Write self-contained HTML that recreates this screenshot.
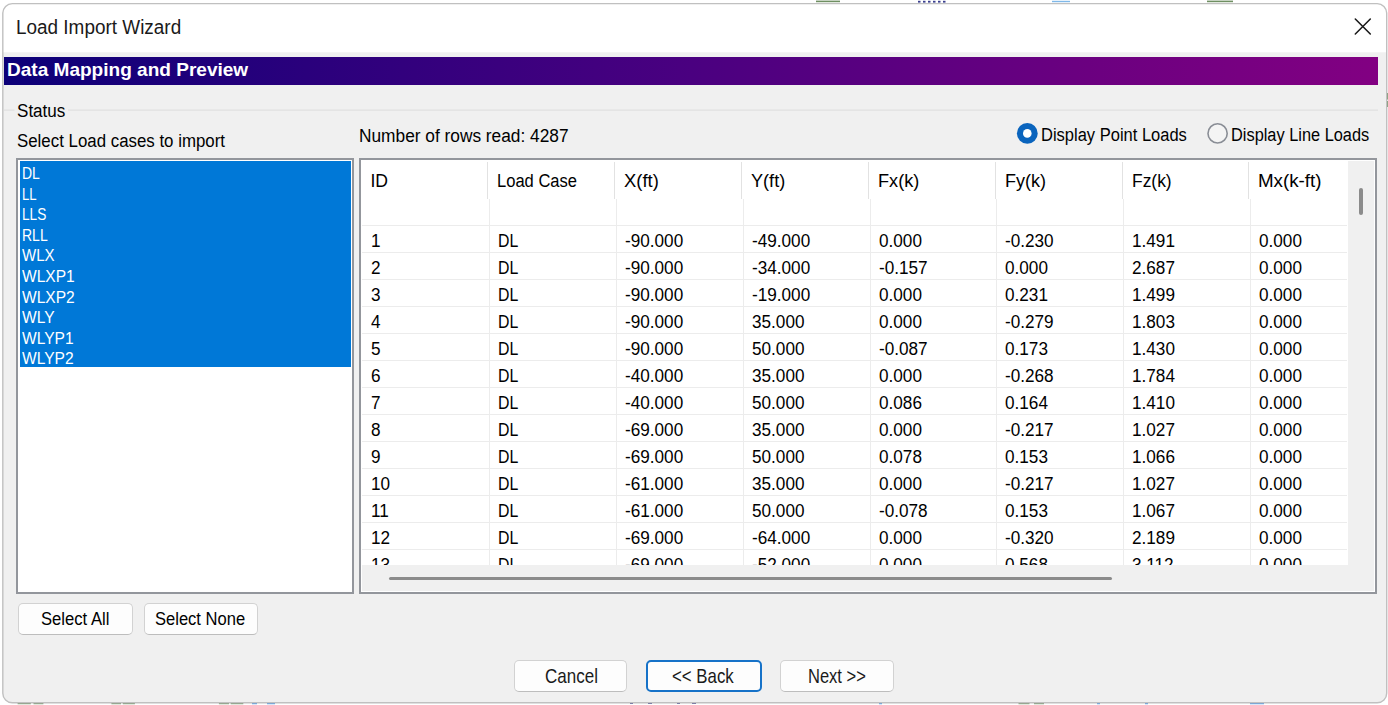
<!DOCTYPE html>
<html lang="en"><head><meta charset="utf-8"><title>Load Import Wizard</title>
<style>
html,body{margin:0;padding:0;background:#fff;}
body{width:1388px;height:705px;position:relative;overflow:hidden;font-family:'Liberation Sans',sans-serif;}
.a{position:absolute;box-sizing:border-box;}
.t{position:absolute;white-space:nowrap;transform-origin:0 50%;display:block;}
#win{left:3px;top:3px;width:1384px;height:699px;border:1px solid #bcbcbc;border-radius:9px;background:#f0f0f0;overflow:hidden;box-shadow:0 0 2px rgba(0,0,0,.15);}
#titlebar{left:0;top:0;width:1384px;height:48.5px;background:#fff;}
#grad{left:4px;top:56.5px;width:1373.8px;height:28.5px;background:linear-gradient(90deg,#0c0078 0%,#2a007c 22%,#4a0080 50%,#6a0080 78%,#820082 100%);}
.gl{height:1px;background:#dcdcdc;}
.box{border:2px solid #93969c;background:#fff;}
.sel{background:#0078d7;}
.btn{background:#fdfdfd;border:1px solid #d2d2d2;border-bottom-color:#bdbdbd;border-radius:5px;}
.hg{background:#ececec;height:1px;}
.vg{background:#ececec;width:1px;}
.hs{background:#e2e2e2;width:1px;}
</style></head><body>
<svg class="a" style="left:0;top:0" width="1388" height="705" viewBox="0 0 1388 705">
<defs><clipPath id="wc"><rect x="2.8" y="3.6" width="1383.9" height="699.2" rx="9.5" ry="9.5"/></clipPath></defs>
<rect x="17.6" y="702.6" width="13.2" height="1.6" fill="#6f8f62"/><rect x="33.5" y="702.6" width="9.9" height="1.6" fill="#6f8f62"/><rect x="111.4" y="702.6" width="9.6" height="1.6" fill="#6f8f62"/><rect x="122.8" y="702.6" width="12.1" height="1.6" fill="#6f8f62"/><rect x="218.9" y="702.6" width="10.1" height="1.6" fill="#6f8f62"/><rect x="230.7" y="702.6" width="12.6" height="1.6" fill="#6f8f62"/><rect x="1018.5" y="702.6" width="11.0" height="1.6" fill="#6f8f62"/><rect x="1034" y="702.6" width="10" height="1.6" fill="#6f8f62"/><rect x="252" y="702.6" width="5" height="1.6" fill="#3a8fe8"/><rect x="267" y="702.6" width="8" height="1.6" fill="#3a8fe8"/><rect x="879" y="702.6" width="3" height="1.6" fill="#3a8fe8"/><rect x="1097" y="702.6" width="3" height="1.6" fill="#3a8fe8"/><rect x="1145" y="702.6" width="3" height="1.6" fill="#3a8fe8"/><rect x="1250" y="702.6" width="14" height="1.6" fill="#3a8fe8"/><rect x="630" y="702.8" width="3" height="1.2" fill="#3b3f8f"/><rect x="648" y="702.8" width="4" height="1.2" fill="#3b3f8f"/><rect x="677" y="702.8" width="3" height="1.2" fill="#3b3f8f"/><rect x="692" y="702.8" width="4" height="1.2" fill="#3b3f8f"/><rect x="816" y="0.6" width="24" height="1.6" fill="#6f8f62"/><rect x="1207" y="0.6" width="26" height="1.6" fill="#6f8f62"/><rect x="918" y="0.8" width="2.5" height="1.8" fill="#3b3f8f"/><rect x="923" y="0.8" width="2.5" height="1.8" fill="#3b3f8f"/><rect x="928" y="0.8" width="2.5" height="1.8" fill="#3b3f8f"/><rect x="933" y="0.8" width="2.5" height="1.8" fill="#3b3f8f"/><rect x="938" y="0.8" width="2.5" height="1.8" fill="#3b3f8f"/><rect x="943" y="0.8" width="2.5" height="1.8" fill="#3b3f8f"/><rect x="1052" y="0.8" width="18" height="1.4" fill="#7fb8e8"/><rect x="1386.6" y="93" width="1.4" height="6.5" fill="#6f8f62"/><rect x="1386.6" y="101" width="1.4" height="6" fill="#6f8f62"/>
<rect x="2.8" y="3.6" width="1383.9" height="699.2" rx="9.5" ry="9.5" fill="#f0f0f0"/>
<rect x="0" y="0" width="1388" height="52.3" fill="#fff" clip-path="url(#wc)"/>
<rect x="2.8" y="3.6" width="1383.9" height="699.2" rx="9.5" ry="9.5" fill="none" stroke="#c0c0c0" stroke-width="1.4"/>
<rect x="4" y="109.6" width="10.5" height="1" fill="#dcdcdc"/><rect x="68" y="109.6" width="1310" height="1" fill="#dcdcdc"/>
</svg>
<svg class="a" style="left:1352px;top:16px" width="22" height="22" viewBox="0 0 22 22"><path d="M3.3 3.0 L18.3 18.0 M18.3 3.0 L3.3 18.0" stroke="#1a1a1a" stroke-width="1.55" fill="none" stroke-linecap="round"/></svg>
<div id="grad" class="a"></div>
<svg class="a" style="left:1015px;top:121px" width="25" height="25" viewBox="0 0 25 25"><circle cx="12.3" cy="12.4" r="10.4" fill="#0a64bd"/><circle cx="12.3" cy="12.4" r="4.3" fill="#fff"/></svg>
<svg class="a" style="left:1205px;top:121px" width="25" height="25" viewBox="0 0 25 25"><circle cx="12.6" cy="12.4" r="9.6" fill="#f4f4f4" stroke="#898d95" stroke-width="1.6"/></svg>
<div class="a box" style="left:16.4px;top:158px;width:337.5px;height:435.7px"></div>
<div class="a sel" style="left:19.7px;top:161.2px;width:331.1px;height:205.8px"></div>
<div class="a box" style="left:359px;top:158px;width:1018px;height:435.7px"></div>
<div class="a" style="left:1348.2px;top:161.2px;width:25.8px;height:429.8px;background:#f0f0f0"></div>
<div class="a" style="left:362px;top:565px;width:1012px;height:26px;background:#f0f0f0"></div>
<div class="a" style="left:1358.9px;top:188.4px;width:4px;height:26.6px;background:#8b8b8b;border-radius:2px"></div>
<div class="a" style="left:389px;top:576.8px;width:723px;height:3px;background:#8b8b8b;border-radius:1.5px"></div>
<div class="a hs" style="left:487.30px;top:161.5px;height:37.8px"></div><div class="a vg" style="left:489.00px;top:199.3px;height:365.7px"></div>
<div class="a hs" style="left:614.15px;top:161.5px;height:37.8px"></div><div class="a vg" style="left:615.85px;top:199.3px;height:365.7px"></div>
<div class="a hs" style="left:741.00px;top:161.5px;height:37.8px"></div><div class="a vg" style="left:742.70px;top:199.3px;height:365.7px"></div>
<div class="a hs" style="left:867.85px;top:161.5px;height:37.8px"></div><div class="a vg" style="left:869.55px;top:199.3px;height:365.7px"></div>
<div class="a hs" style="left:994.70px;top:161.5px;height:37.8px"></div><div class="a vg" style="left:996.40px;top:199.3px;height:365.7px"></div>
<div class="a hs" style="left:1121.55px;top:161.5px;height:37.8px"></div><div class="a vg" style="left:1123.25px;top:199.3px;height:365.7px"></div>
<div class="a hs" style="left:1248.40px;top:161.5px;height:37.8px"></div><div class="a vg" style="left:1250.10px;top:199.3px;height:365.7px"></div>
<div class="a hg" style="left:362.3px;top:224.90px;width:984.7px"></div>
<div class="a hg" style="left:362.3px;top:251.90px;width:984.7px"></div>
<div class="a hg" style="left:362.3px;top:278.90px;width:984.7px"></div>
<div class="a hg" style="left:362.3px;top:305.90px;width:984.7px"></div>
<div class="a hg" style="left:362.3px;top:332.90px;width:984.7px"></div>
<div class="a hg" style="left:362.3px;top:359.90px;width:984.7px"></div>
<div class="a hg" style="left:362.3px;top:386.90px;width:984.7px"></div>
<div class="a hg" style="left:362.3px;top:413.90px;width:984.7px"></div>
<div class="a hg" style="left:362.3px;top:440.90px;width:984.7px"></div>
<div class="a hg" style="left:362.3px;top:467.90px;width:984.7px"></div>
<div class="a hg" style="left:362.3px;top:494.90px;width:984.7px"></div>
<div class="a hg" style="left:362.3px;top:521.90px;width:984.7px"></div>
<div class="a hg" style="left:362.3px;top:548.90px;width:984.7px"></div>
<div class="a" style="left:362px;top:161px;width:986.2px;height:404px;overflow:hidden"><span class="t" style="left:9.20px;top:71.80px;font-size:17.6px;line-height:17.6px;color:#000;transform:scaleX(0.975);">1</span><span class="t" style="left:136.05px;top:71.80px;font-size:17.6px;line-height:17.6px;color:#000;transform:scaleX(0.9);">DL</span><span class="t" style="left:262.90px;top:71.80px;font-size:17.6px;line-height:17.6px;color:#000;transform:scaleX(0.975);">-90.000</span><span class="t" style="left:389.75px;top:71.80px;font-size:17.6px;line-height:17.6px;color:#000;transform:scaleX(0.975);">-49.000</span><span class="t" style="left:516.60px;top:71.80px;font-size:17.6px;line-height:17.6px;color:#000;transform:scaleX(0.975);">0.000</span><span class="t" style="left:643.45px;top:71.80px;font-size:17.6px;line-height:17.6px;color:#000;transform:scaleX(0.975);">-0.230</span><span class="t" style="left:770.30px;top:71.80px;font-size:17.6px;line-height:17.6px;color:#000;transform:scaleX(0.975);">1.491</span><span class="t" style="left:897.15px;top:71.80px;font-size:17.6px;line-height:17.6px;color:#000;transform:scaleX(0.975);">0.000</span><span class="t" style="left:9.20px;top:98.80px;font-size:17.6px;line-height:17.6px;color:#000;transform:scaleX(0.975);">2</span><span class="t" style="left:136.05px;top:98.80px;font-size:17.6px;line-height:17.6px;color:#000;transform:scaleX(0.9);">DL</span><span class="t" style="left:262.90px;top:98.80px;font-size:17.6px;line-height:17.6px;color:#000;transform:scaleX(0.975);">-90.000</span><span class="t" style="left:389.75px;top:98.80px;font-size:17.6px;line-height:17.6px;color:#000;transform:scaleX(0.975);">-34.000</span><span class="t" style="left:516.60px;top:98.80px;font-size:17.6px;line-height:17.6px;color:#000;transform:scaleX(0.975);">-0.157</span><span class="t" style="left:643.45px;top:98.80px;font-size:17.6px;line-height:17.6px;color:#000;transform:scaleX(0.975);">0.000</span><span class="t" style="left:770.30px;top:98.80px;font-size:17.6px;line-height:17.6px;color:#000;transform:scaleX(0.975);">2.687</span><span class="t" style="left:897.15px;top:98.80px;font-size:17.6px;line-height:17.6px;color:#000;transform:scaleX(0.975);">0.000</span><span class="t" style="left:9.20px;top:125.80px;font-size:17.6px;line-height:17.6px;color:#000;transform:scaleX(0.975);">3</span><span class="t" style="left:136.05px;top:125.80px;font-size:17.6px;line-height:17.6px;color:#000;transform:scaleX(0.9);">DL</span><span class="t" style="left:262.90px;top:125.80px;font-size:17.6px;line-height:17.6px;color:#000;transform:scaleX(0.975);">-90.000</span><span class="t" style="left:389.75px;top:125.80px;font-size:17.6px;line-height:17.6px;color:#000;transform:scaleX(0.975);">-19.000</span><span class="t" style="left:516.60px;top:125.80px;font-size:17.6px;line-height:17.6px;color:#000;transform:scaleX(0.975);">0.000</span><span class="t" style="left:643.45px;top:125.80px;font-size:17.6px;line-height:17.6px;color:#000;transform:scaleX(0.975);">0.231</span><span class="t" style="left:770.30px;top:125.80px;font-size:17.6px;line-height:17.6px;color:#000;transform:scaleX(0.975);">1.499</span><span class="t" style="left:897.15px;top:125.80px;font-size:17.6px;line-height:17.6px;color:#000;transform:scaleX(0.975);">0.000</span><span class="t" style="left:9.20px;top:152.80px;font-size:17.6px;line-height:17.6px;color:#000;transform:scaleX(0.975);">4</span><span class="t" style="left:136.05px;top:152.80px;font-size:17.6px;line-height:17.6px;color:#000;transform:scaleX(0.9);">DL</span><span class="t" style="left:262.90px;top:152.80px;font-size:17.6px;line-height:17.6px;color:#000;transform:scaleX(0.975);">-90.000</span><span class="t" style="left:389.75px;top:152.80px;font-size:17.6px;line-height:17.6px;color:#000;transform:scaleX(0.975);">35.000</span><span class="t" style="left:516.60px;top:152.80px;font-size:17.6px;line-height:17.6px;color:#000;transform:scaleX(0.975);">0.000</span><span class="t" style="left:643.45px;top:152.80px;font-size:17.6px;line-height:17.6px;color:#000;transform:scaleX(0.975);">-0.279</span><span class="t" style="left:770.30px;top:152.80px;font-size:17.6px;line-height:17.6px;color:#000;transform:scaleX(0.975);">1.803</span><span class="t" style="left:897.15px;top:152.80px;font-size:17.6px;line-height:17.6px;color:#000;transform:scaleX(0.975);">0.000</span><span class="t" style="left:9.20px;top:179.80px;font-size:17.6px;line-height:17.6px;color:#000;transform:scaleX(0.975);">5</span><span class="t" style="left:136.05px;top:179.80px;font-size:17.6px;line-height:17.6px;color:#000;transform:scaleX(0.9);">DL</span><span class="t" style="left:262.90px;top:179.80px;font-size:17.6px;line-height:17.6px;color:#000;transform:scaleX(0.975);">-90.000</span><span class="t" style="left:389.75px;top:179.80px;font-size:17.6px;line-height:17.6px;color:#000;transform:scaleX(0.975);">50.000</span><span class="t" style="left:516.60px;top:179.80px;font-size:17.6px;line-height:17.6px;color:#000;transform:scaleX(0.975);">-0.087</span><span class="t" style="left:643.45px;top:179.80px;font-size:17.6px;line-height:17.6px;color:#000;transform:scaleX(0.975);">0.173</span><span class="t" style="left:770.30px;top:179.80px;font-size:17.6px;line-height:17.6px;color:#000;transform:scaleX(0.975);">1.430</span><span class="t" style="left:897.15px;top:179.80px;font-size:17.6px;line-height:17.6px;color:#000;transform:scaleX(0.975);">0.000</span><span class="t" style="left:9.20px;top:206.80px;font-size:17.6px;line-height:17.6px;color:#000;transform:scaleX(0.975);">6</span><span class="t" style="left:136.05px;top:206.80px;font-size:17.6px;line-height:17.6px;color:#000;transform:scaleX(0.9);">DL</span><span class="t" style="left:262.90px;top:206.80px;font-size:17.6px;line-height:17.6px;color:#000;transform:scaleX(0.975);">-40.000</span><span class="t" style="left:389.75px;top:206.80px;font-size:17.6px;line-height:17.6px;color:#000;transform:scaleX(0.975);">35.000</span><span class="t" style="left:516.60px;top:206.80px;font-size:17.6px;line-height:17.6px;color:#000;transform:scaleX(0.975);">0.000</span><span class="t" style="left:643.45px;top:206.80px;font-size:17.6px;line-height:17.6px;color:#000;transform:scaleX(0.975);">-0.268</span><span class="t" style="left:770.30px;top:206.80px;font-size:17.6px;line-height:17.6px;color:#000;transform:scaleX(0.975);">1.784</span><span class="t" style="left:897.15px;top:206.80px;font-size:17.6px;line-height:17.6px;color:#000;transform:scaleX(0.975);">0.000</span><span class="t" style="left:9.20px;top:233.80px;font-size:17.6px;line-height:17.6px;color:#000;transform:scaleX(0.975);">7</span><span class="t" style="left:136.05px;top:233.80px;font-size:17.6px;line-height:17.6px;color:#000;transform:scaleX(0.9);">DL</span><span class="t" style="left:262.90px;top:233.80px;font-size:17.6px;line-height:17.6px;color:#000;transform:scaleX(0.975);">-40.000</span><span class="t" style="left:389.75px;top:233.80px;font-size:17.6px;line-height:17.6px;color:#000;transform:scaleX(0.975);">50.000</span><span class="t" style="left:516.60px;top:233.80px;font-size:17.6px;line-height:17.6px;color:#000;transform:scaleX(0.975);">0.086</span><span class="t" style="left:643.45px;top:233.80px;font-size:17.6px;line-height:17.6px;color:#000;transform:scaleX(0.975);">0.164</span><span class="t" style="left:770.30px;top:233.80px;font-size:17.6px;line-height:17.6px;color:#000;transform:scaleX(0.975);">1.410</span><span class="t" style="left:897.15px;top:233.80px;font-size:17.6px;line-height:17.6px;color:#000;transform:scaleX(0.975);">0.000</span><span class="t" style="left:9.20px;top:260.80px;font-size:17.6px;line-height:17.6px;color:#000;transform:scaleX(0.975);">8</span><span class="t" style="left:136.05px;top:260.80px;font-size:17.6px;line-height:17.6px;color:#000;transform:scaleX(0.9);">DL</span><span class="t" style="left:262.90px;top:260.80px;font-size:17.6px;line-height:17.6px;color:#000;transform:scaleX(0.975);">-69.000</span><span class="t" style="left:389.75px;top:260.80px;font-size:17.6px;line-height:17.6px;color:#000;transform:scaleX(0.975);">35.000</span><span class="t" style="left:516.60px;top:260.80px;font-size:17.6px;line-height:17.6px;color:#000;transform:scaleX(0.975);">0.000</span><span class="t" style="left:643.45px;top:260.80px;font-size:17.6px;line-height:17.6px;color:#000;transform:scaleX(0.975);">-0.217</span><span class="t" style="left:770.30px;top:260.80px;font-size:17.6px;line-height:17.6px;color:#000;transform:scaleX(0.975);">1.027</span><span class="t" style="left:897.15px;top:260.80px;font-size:17.6px;line-height:17.6px;color:#000;transform:scaleX(0.975);">0.000</span><span class="t" style="left:9.20px;top:287.80px;font-size:17.6px;line-height:17.6px;color:#000;transform:scaleX(0.975);">9</span><span class="t" style="left:136.05px;top:287.80px;font-size:17.6px;line-height:17.6px;color:#000;transform:scaleX(0.9);">DL</span><span class="t" style="left:262.90px;top:287.80px;font-size:17.6px;line-height:17.6px;color:#000;transform:scaleX(0.975);">-69.000</span><span class="t" style="left:389.75px;top:287.80px;font-size:17.6px;line-height:17.6px;color:#000;transform:scaleX(0.975);">50.000</span><span class="t" style="left:516.60px;top:287.80px;font-size:17.6px;line-height:17.6px;color:#000;transform:scaleX(0.975);">0.078</span><span class="t" style="left:643.45px;top:287.80px;font-size:17.6px;line-height:17.6px;color:#000;transform:scaleX(0.975);">0.153</span><span class="t" style="left:770.30px;top:287.80px;font-size:17.6px;line-height:17.6px;color:#000;transform:scaleX(0.975);">1.066</span><span class="t" style="left:897.15px;top:287.80px;font-size:17.6px;line-height:17.6px;color:#000;transform:scaleX(0.975);">0.000</span><span class="t" style="left:9.20px;top:314.80px;font-size:17.6px;line-height:17.6px;color:#000;transform:scaleX(0.975);">10</span><span class="t" style="left:136.05px;top:314.80px;font-size:17.6px;line-height:17.6px;color:#000;transform:scaleX(0.9);">DL</span><span class="t" style="left:262.90px;top:314.80px;font-size:17.6px;line-height:17.6px;color:#000;transform:scaleX(0.975);">-61.000</span><span class="t" style="left:389.75px;top:314.80px;font-size:17.6px;line-height:17.6px;color:#000;transform:scaleX(0.975);">35.000</span><span class="t" style="left:516.60px;top:314.80px;font-size:17.6px;line-height:17.6px;color:#000;transform:scaleX(0.975);">0.000</span><span class="t" style="left:643.45px;top:314.80px;font-size:17.6px;line-height:17.6px;color:#000;transform:scaleX(0.975);">-0.217</span><span class="t" style="left:770.30px;top:314.80px;font-size:17.6px;line-height:17.6px;color:#000;transform:scaleX(0.975);">1.027</span><span class="t" style="left:897.15px;top:314.80px;font-size:17.6px;line-height:17.6px;color:#000;transform:scaleX(0.975);">0.000</span><span class="t" style="left:9.20px;top:341.80px;font-size:17.6px;line-height:17.6px;color:#000;transform:scaleX(0.975);">11</span><span class="t" style="left:136.05px;top:341.80px;font-size:17.6px;line-height:17.6px;color:#000;transform:scaleX(0.9);">DL</span><span class="t" style="left:262.90px;top:341.80px;font-size:17.6px;line-height:17.6px;color:#000;transform:scaleX(0.975);">-61.000</span><span class="t" style="left:389.75px;top:341.80px;font-size:17.6px;line-height:17.6px;color:#000;transform:scaleX(0.975);">50.000</span><span class="t" style="left:516.60px;top:341.80px;font-size:17.6px;line-height:17.6px;color:#000;transform:scaleX(0.975);">-0.078</span><span class="t" style="left:643.45px;top:341.80px;font-size:17.6px;line-height:17.6px;color:#000;transform:scaleX(0.975);">0.153</span><span class="t" style="left:770.30px;top:341.80px;font-size:17.6px;line-height:17.6px;color:#000;transform:scaleX(0.975);">1.067</span><span class="t" style="left:897.15px;top:341.80px;font-size:17.6px;line-height:17.6px;color:#000;transform:scaleX(0.975);">0.000</span><span class="t" style="left:9.20px;top:368.80px;font-size:17.6px;line-height:17.6px;color:#000;transform:scaleX(0.975);">12</span><span class="t" style="left:136.05px;top:368.80px;font-size:17.6px;line-height:17.6px;color:#000;transform:scaleX(0.9);">DL</span><span class="t" style="left:262.90px;top:368.80px;font-size:17.6px;line-height:17.6px;color:#000;transform:scaleX(0.975);">-69.000</span><span class="t" style="left:389.75px;top:368.80px;font-size:17.6px;line-height:17.6px;color:#000;transform:scaleX(0.975);">-64.000</span><span class="t" style="left:516.60px;top:368.80px;font-size:17.6px;line-height:17.6px;color:#000;transform:scaleX(0.975);">0.000</span><span class="t" style="left:643.45px;top:368.80px;font-size:17.6px;line-height:17.6px;color:#000;transform:scaleX(0.975);">-0.320</span><span class="t" style="left:770.30px;top:368.80px;font-size:17.6px;line-height:17.6px;color:#000;transform:scaleX(0.975);">2.189</span><span class="t" style="left:897.15px;top:368.80px;font-size:17.6px;line-height:17.6px;color:#000;transform:scaleX(0.975);">0.000</span><span class="t" style="left:9.20px;top:395.80px;font-size:17.6px;line-height:17.6px;color:#000;transform:scaleX(0.975);">13</span><span class="t" style="left:136.05px;top:395.80px;font-size:17.6px;line-height:17.6px;color:#000;transform:scaleX(0.9);">DL</span><span class="t" style="left:262.90px;top:395.80px;font-size:17.6px;line-height:17.6px;color:#000;transform:scaleX(0.975);">-69.000</span><span class="t" style="left:389.75px;top:395.80px;font-size:17.6px;line-height:17.6px;color:#000;transform:scaleX(0.975);">-52.000</span><span class="t" style="left:516.60px;top:395.80px;font-size:17.6px;line-height:17.6px;color:#000;transform:scaleX(0.975);">0.000</span><span class="t" style="left:643.45px;top:395.80px;font-size:17.6px;line-height:17.6px;color:#000;transform:scaleX(0.975);">0.568</span><span class="t" style="left:770.30px;top:395.80px;font-size:17.6px;line-height:17.6px;color:#000;transform:scaleX(0.975);">3.112</span><span class="t" style="left:897.15px;top:395.80px;font-size:17.6px;line-height:17.6px;color:#000;transform:scaleX(0.975);">0.000</span></div>
<div class="a btn" style="left:18.4px;top:603.2px;width:114.2px;height:32px"></div>
<div class="a btn" style="left:143.7px;top:603.2px;width:114.6px;height:32px"></div>
<div class="a btn" style="left:513.5px;top:659.8px;width:113.8px;height:32px"></div>
<div class="a btn" style="left:646.2px;top:659.8px;width:115.4px;height:32px;border:2px solid #1672c8"></div>
<div class="a btn" style="left:780px;top:659.8px;width:114px;height:32px"></div>
<span class="t" style="left:15.50px;top:18.11px;font-size:19.6px;line-height:19.6px;color:#1a1a1a;transform:scaleX(0.966);">Load Import Wizard</span>
<span class="t" style="left:7.30px;top:61.12px;font-size:18.4px;line-height:18.4px;color:#fff;font-weight:bold;transform:scaleX(1.035);">Data Mapping and Preview</span>
<span class="t" style="left:16.80px;top:103.00px;font-size:17.6px;line-height:17.6px;color:#000;transform:scaleX(0.97);">Status</span>
<span class="t" style="left:16.80px;top:132.80px;font-size:17.6px;line-height:17.6px;color:#000;transform:scaleX(0.958);">Select Load cases to import</span>
<span class="t" style="left:359.30px;top:127.90px;font-size:17.6px;line-height:17.6px;color:#000;transform:scaleX(0.983);">Number of rows read: 4287</span>
<span class="t" style="left:1041.20px;top:126.90px;font-size:17.6px;line-height:17.6px;color:#000;transform:scaleX(0.938);">Display Point Loads</span>
<span class="t" style="left:1231.40px;top:126.90px;font-size:17.6px;line-height:17.6px;color:#000;transform:scaleX(0.93);">Display Line Loads</span>
<span class="t" style="left:40.90px;top:611.20px;font-size:17.6px;line-height:17.6px;color:#000;transform:scaleX(0.945);">Select All</span>
<span class="t" style="left:154.50px;top:611.20px;font-size:17.6px;line-height:17.6px;color:#000;transform:scaleX(0.94);">Select None</span>
<span class="t" style="left:544.90px;top:666.64px;font-size:19.8px;line-height:19.8px;color:#1a1a1a;transform:scaleX(0.86);">Cancel</span>
<span class="t" style="left:671.60px;top:666.64px;font-size:19.8px;line-height:19.8px;color:#1a1a1a;transform:scaleX(0.85);">&lt;&lt; Back</span>
<span class="t" style="left:808.00px;top:666.64px;font-size:19.8px;line-height:19.8px;color:#1a1a1a;transform:scaleX(0.835);">Next &gt;&gt;</span>
<span class="t" style="left:21.90px;top:165.06px;font-size:17.3px;line-height:17.3px;color:#fff;transform:scaleX(0.81);">DL</span>
<span class="t" style="left:21.90px;top:185.66px;font-size:17.3px;line-height:17.3px;color:#fff;transform:scaleX(0.76);">LL</span>
<span class="t" style="left:21.90px;top:206.26px;font-size:17.3px;line-height:17.3px;color:#fff;transform:scaleX(0.79);">LLS</span>
<span class="t" style="left:21.90px;top:226.86px;font-size:17.3px;line-height:17.3px;color:#fff;transform:scaleX(0.81);">RLL</span>
<span class="t" style="left:21.90px;top:247.46px;font-size:17.3px;line-height:17.3px;color:#fff;transform:scaleX(0.87);">WLX</span>
<span class="t" style="left:21.90px;top:268.06px;font-size:17.3px;line-height:17.3px;color:#fff;transform:scaleX(0.9);">WLXP1</span>
<span class="t" style="left:21.90px;top:288.66px;font-size:17.3px;line-height:17.3px;color:#fff;transform:scaleX(0.9);">WLXP2</span>
<span class="t" style="left:21.90px;top:309.26px;font-size:17.3px;line-height:17.3px;color:#fff;transform:scaleX(0.9);">WLY</span>
<span class="t" style="left:21.90px;top:329.86px;font-size:17.3px;line-height:17.3px;color:#fff;transform:scaleX(0.9);">WLYP1</span>
<span class="t" style="left:21.90px;top:350.46px;font-size:17.3px;line-height:17.3px;color:#fff;transform:scaleX(0.9);">WLYP2</span>
<span class="t" style="left:370.40px;top:172.80px;font-size:17.6px;line-height:17.6px;color:#000;">ID</span>
<span class="t" style="left:497.25px;top:172.80px;font-size:17.6px;line-height:17.6px;color:#000;transform:scaleX(0.94);">Load Case</span>
<span class="t" style="left:624.10px;top:172.80px;font-size:17.6px;line-height:17.6px;color:#000;transform:scaleX(1.046);">X(ft)</span>
<span class="t" style="left:750.95px;top:172.80px;font-size:17.6px;line-height:17.6px;color:#000;transform:scaleX(1.03);">Y(ft)</span>
<span class="t" style="left:877.80px;top:172.80px;font-size:17.6px;line-height:17.6px;color:#000;transform:scaleX(1.03);">Fx(k)</span>
<span class="t" style="left:1004.65px;top:172.80px;font-size:17.6px;line-height:17.6px;color:#000;transform:scaleX(1.025);">Fy(k)</span>
<span class="t" style="left:1131.50px;top:172.80px;font-size:17.6px;line-height:17.6px;color:#000;transform:scaleX(0.99);">Fz(k)</span>
<span class="t" style="left:1258.35px;top:172.80px;font-size:17.6px;line-height:17.6px;color:#000;transform:scaleX(1.066);">Mx(k-ft)</span>
</body></html>
